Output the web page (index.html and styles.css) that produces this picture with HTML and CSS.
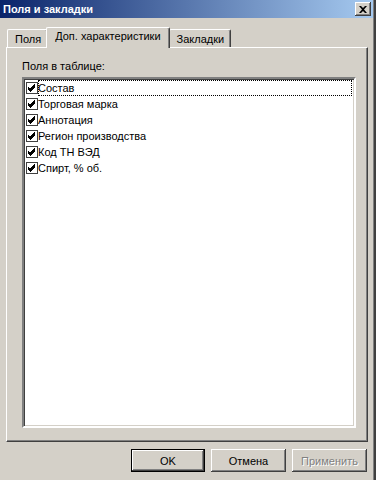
FILE: index.html
```html
<!DOCTYPE html>
<html lang="ru">
<head>
<meta charset="UTF-8">
<title>Поля и закладки</title>
<link rel="stylesheet" href="styles.css">
</head>
<body>
<div class="win">
  <div class="title">
    <span>Поля и закладки</span>
    <button class="x">
      <svg width="8" height="7" viewBox="0 0 8 7"><path d="M0 0h2l2 2 2-2h2L5 3.5 8 7H6L4 5 2 7H0l3-3.5z" fill="#000"/></svg>
    </button>
  </div>

  <div class="client">
    <div class="tabs">
      <div class="tab">Поля</div>
      <div class="tab on">Доп. характеристики</div>
      <div class="tab">Закладки</div>
    </div>

    <div class="panel">
      <div class="cap">Поля в таблице:</div>
      <div class="list">
        <div class="row focus"><i class="chk"></i><span>Состав</span></div>
        <div class="row"><i class="chk"></i><span>Торговая марка</span></div>
        <div class="row"><i class="chk"></i><span>Аннотация</span></div>
        <div class="row"><i class="chk"></i><span>Регион производства</span></div>
        <div class="row"><i class="chk"></i><span>Код ТН ВЭД</span></div>
        <div class="row"><i class="chk"></i><span>Спирт, % об.</span></div>
      </div>
    </div>

    <div class="btns">
      <button class="btn def">OK</button>
      <button class="btn">Отмена</button>
      <button class="btn off">Применить</button>
    </div>
  </div>
</div>
</body>
</html>
```

FILE: styles.css
```css
*{box-sizing:border-box;margin:0;padding:0}
body{background:#d4d0c8;font:11px "Liberation Sans",Arial,sans-serif;color:#000}

.win{width:376px;height:480px;border-right:2px solid #404040;box-shadow:inset -1px 0 #808080;display:flex;flex-direction:column}

/* ── title bar ── */
.title{height:18px;display:flex;align-items:center;justify-content:space-between;padding:0 2px 0 3px;margin-right:1px;
  background:linear-gradient(90deg,#0a246a 0%,#a6caf0 100%);color:#fff;font-weight:bold;font-size:11px}
.x{width:16px;height:14px;border:none;background:#d4d0c8;display:flex;align-items:center;justify-content:center;
  box-shadow:inset -1px -1px #404040,inset 1px 1px #fff,inset -2px -2px #808080}

.client{flex:1;display:flex;flex-direction:column;padding:9px 6px 0 6px}

/* ── tabs ── */
.tabs{display:flex;align-items:flex-end;height:20px;padding-left:1px;position:relative;z-index:2}
.tab{height:18px;padding:3px 6px 0 7px;border:1px solid #fff;border-bottom:none;border-right-color:#404040;
  box-shadow:inset -1px 0 #808080;border-radius:2px 2px 0 0}
.tab.on{height:21px;margin:0 -2px -1px;padding:2px 8px 0 8px;background:#d4d0c8;position:relative;z-index:3}
.tab.on+.tab{margin-left:1px}

/* ── page ── */
.panel{height:395px;border:1px solid #fff;border-right-color:#404040;border-bottom-color:#404040;
  box-shadow:inset -1px -1px #808080;padding:12px 11px 13px 15px;display:flex;flex-direction:column}
.cap{height:17px;line-height:12px}
.list{flex:1;background:#fff;border:2px solid;border-color:#808080 #fff #fff #808080;
  box-shadow:inset 1px 1px #404040,inset -1px -1px #d4d0c8;padding:1px 2px 2px 1px}
.row{height:16px;display:flex;align-items:center}
.row span{flex:1;height:16px;line-height:16px}
.row.focus span{outline:1px dotted #000;outline-offset:-1px}
.chk{width:12px;height:12px;margin:0 0 0 1px;flex:none;border:1px solid #404040;background:#fff 1px 1px/8px 8px no-repeat;
  background-image:url("data:image/svg+xml,%3Csvg xmlns='http://www.w3.org/2000/svg' viewBox='0 0 7 7' shape-rendering='crispEdges'%3E%3Cpath d='M0 2L2 4L6 0V3L2 7L0 5Z' fill='%23000'/%3E%3C/svg%3E")}

/* ── buttons ── */
.btns{display:flex;justify-content:flex-end;gap:6px;padding:7px 1px 0 0}
.btn{width:75px;height:23px;border:none;background:#d4d0c8;font:11px "Liberation Sans",Arial,sans-serif;color:#000;
  box-shadow:inset -1px -1px #404040,inset 1px 1px #fff,inset -2px -2px #808080}
.btn.def{width:74px;border:1px solid #000;box-shadow:inset -1px -1px #404040,inset 1px 1px #fff,inset -2px -2px #808080}
.btn.off{color:#808080;text-shadow:1px 1px #fff}
```
